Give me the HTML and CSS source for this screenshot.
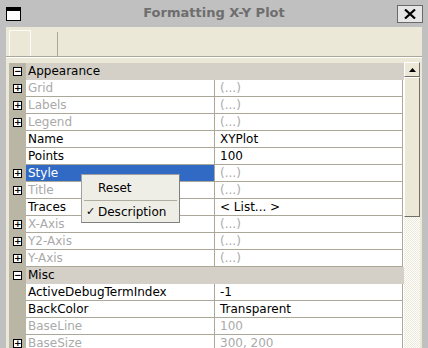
FILE: index.html
```html
<!DOCTYPE html>
<html lang="en">
<head>
    <meta charset="UTF-8">
    <title>Formatting X-Y Plot</title>
    <link rel="stylesheet" href="styles.css">
</head>
<body>

    <!-- title bar -->
    <div class="titlebar">
        <div class="win-icon"></div>
        <div class="title">Formatting X-Y Plot</div>
        <div class="close-btn">
            <svg width="12" height="10" viewBox="0 0 12 10"><path d="M1 0.5 L11 9.5 M11 0.5 L1 9.5" stroke="#000" stroke-width="2.2"/></svg>
        </div>
    </div>

    <!-- client area -->
    <div class="client">
        <div class="toolbar">
            <div class="tool-btn"></div>
            <div class="tool-sep"></div>
        </div>

        <div class="grid-wrap">
            <div class="grid">
                <div class="row cat"><span class="gut"><i class="box">&minus;</i></span><span class="cat-name">Appearance</span></div>
                <div class="row off"><span class="gut"><i class="box">+</i></span><span class="name">Grid</span><span class="val">(...)</span></div>
                <div class="row off"><span class="gut"><i class="box">+</i></span><span class="name">Labels</span><span class="val">(...)</span></div>
                <div class="row off"><span class="gut"><i class="box">+</i></span><span class="name">Legend</span><span class="val">(...)</span></div>
                <div class="row"><span class="gut"></span><span class="name">Name</span><span class="val">XYPlot</span></div>
                <div class="row"><span class="gut"></span><span class="name">Points</span><span class="val">100</span></div>
                <div class="row off sel"><span class="gut"><i class="box">+</i></span><span class="name">Style</span><span class="val">(...)</span></div>
                <div class="row off"><span class="gut"><i class="box">+</i></span><span class="name">Title</span><span class="val">(...)</span></div>
                <div class="row"><span class="gut"></span><span class="name">Traces</span><span class="val">&lt; List... &gt;</span></div>
                <div class="row off"><span class="gut"><i class="box">+</i></span><span class="name">X-Axis</span><span class="val">(...)</span></div>
                <div class="row off"><span class="gut"><i class="box">+</i></span><span class="name">Y2-Axis</span><span class="val">(...)</span></div>
                <div class="row off"><span class="gut"><i class="box">+</i></span><span class="name">Y-Axis</span><span class="val">(...)</span></div>
                <div class="row cat"><span class="gut"><i class="box">&minus;</i></span><span class="cat-name">Misc</span></div>
                <div class="row"><span class="gut"></span><span class="name">ActiveDebugTermIndex</span><span class="val">-1</span></div>
                <div class="row"><span class="gut"></span><span class="name">BackColor</span><span class="val">Transparent</span></div>
                <div class="row off"><span class="gut"></span><span class="name">BaseLine</span><span class="val">100</span></div>
                <div class="row off"><span class="gut"><i class="box">+</i></span><span class="name">BaseSize</span><span class="val">300, 200</span></div>
            </div>

            <!-- scrollbar -->
            <div class="scrollbar">
                <div class="sb-up">
                    <svg width="7" height="4" viewBox="0 0 7 4"><path d="M0 4 L3.5 0 L7 4 Z" fill="#000"/></svg>
                </div>
                <div class="sb-thumb"></div>
                <div class="sb-track"></div>
            </div>
        </div>
    </div>

    <!-- context menu -->
    <div class="menu">
        <div class="menu-item">Reset</div>
        <div class="menu-sep"></div>
        <div class="menu-item item-check"><span class="check">&#10003;</span>Description</div>
    </div>

</body>
</html>
```

FILE: styles.css
```css
body {
    margin: 0;
    width: 428px;
    height: 348px;
    overflow: hidden;
    background-color: #c0c0c0;
    font-family: "DejaVu Sans", Verdana, sans-serif;
    font-size: 12px;
    position: relative;
}

/* title bar */
.titlebar {
    height: 27px;
    display: flex;
    align-items: center;
    position: relative;
}

.win-icon {
    width: 13px;
    height: 9px;
    margin-left: 6px;
    margin-top: 1px;
    background: #fff;
    border: 1px solid #000;
    border-top-width: 4px;
}

.title {
    position: absolute;
    left: 0;
    right: 0;
    top: 5px;
    text-align: center;
    font-weight: bold;
    font-size: 13px;
    color: #6e6e6e;
}

.close-btn {
    margin-left: auto;
    margin-right: 5px;
    margin-top: 1px;
    width: 24px;
    height: 16px;
    border: 1px solid #6a6a6a;
    background: #e6e6e6;
    display: flex;
    align-items: center;
    justify-content: center;
}

/* client area */
.client {
    margin: 0 6px;
    height: 321px;
    background-color: #ebe8d8;
    overflow: hidden;
}

.toolbar {
    height: 30px;
    display: flex;
    align-items: flex-end;
    padding-left: 3px;
    border-bottom: 1px solid #aca899;
    box-sizing: border-box;
}

.tool-btn {
    width: 22px;
    height: 26px;
    border: 1px solid #fbfaf5;
    border-bottom: none;
    box-sizing: border-box;
}

.tool-sep {
    width: 1px;
    height: 24px;
    margin-left: 26px;
    background: #aca899;
}

/* property grid */
.grid-wrap {
    display: flex;
    padding: 5px 2px 0 3px;
    border-top: 1px solid #fff;
}

.grid {
    width: 395px;
}

.row {
    display: grid;
    grid-template-columns: 17px 189px 188px;
    height: 17px;
    line-height: 16px;
    background: #fff;
}

.row .name {
    padding-left: 2px;
    border-bottom: 1px solid #aca899;
    border-right: 1px solid #aca899;
    white-space: nowrap;
    overflow: hidden;
}

.row .val {
    padding-left: 5px;
    border-bottom: 1px solid #aca899;
    border-right: 1px solid #aca899;
    white-space: nowrap;
    color: #000;
}

.gut {
    background: #bab6a5;
    display: flex;
    align-items: center;
    justify-content: center;
}

.box {
    width: 7px;
    height: 7px;
    border: 1px solid #000;
    background: #fff;
    font-style: normal;
    font-size: 9px;
    font-weight: bold;
    line-height: 7px;
    text-align: center;
    color: #000;
    margin-top: -1px;
}

.off .name,
.off .val {
    color: #aaa;
}

.cat {
    grid-template-columns: 17px 378px;
    background: #d4d0c8;
}

.cat-name {
    padding-left: 2px;
    color: #000;
}

.sel .name {
    background: #316ac5;
    color: #fff;
}

/* scrollbar */
.scrollbar {
    width: 16px;
    height: 290px;
    display: flex;
    flex-direction: column;
    margin-top: -1px;
}

.sb-up,
.sb-thumb {
    background: #ebe8d8;
    border: 1px solid;
    border-color: #fff #716f64 #716f64 #fff;
    box-sizing: border-box;
}

.sb-up {
    height: 15px;
    display: flex;
    align-items: center;
    justify-content: center;
}

.sb-thumb {
    height: 140px;
}

.sb-track {
    flex: 1;
    background-color: #fff;
    background-image: repeating-conic-gradient(#ebe8d8 0 25%, #fff 0 50%);
    background-size: 2px 2px;
}

/* context menu */
.menu {
    position: absolute;
    left: 81px;
    top: 174px;
    width: 97px;
    background: #efeee6;
    border: 1px solid #a0a0a0;
    border-right-color: #808080;
    border-bottom-color: #808080;
    padding: 3px 0 1px;
}

.menu-item {
    height: 20px;
    line-height: 20px;
    padding-left: 16px;
    position: relative;
}

.item-check {
    height: 18px;
    line-height: 18px;
}

.check {
    position: absolute;
    left: 4px;
    font-size: 11px;
}

.menu-sep {
    height: 1px;
    background: #b0ada0;
    margin: 2px 2px;
}
```
